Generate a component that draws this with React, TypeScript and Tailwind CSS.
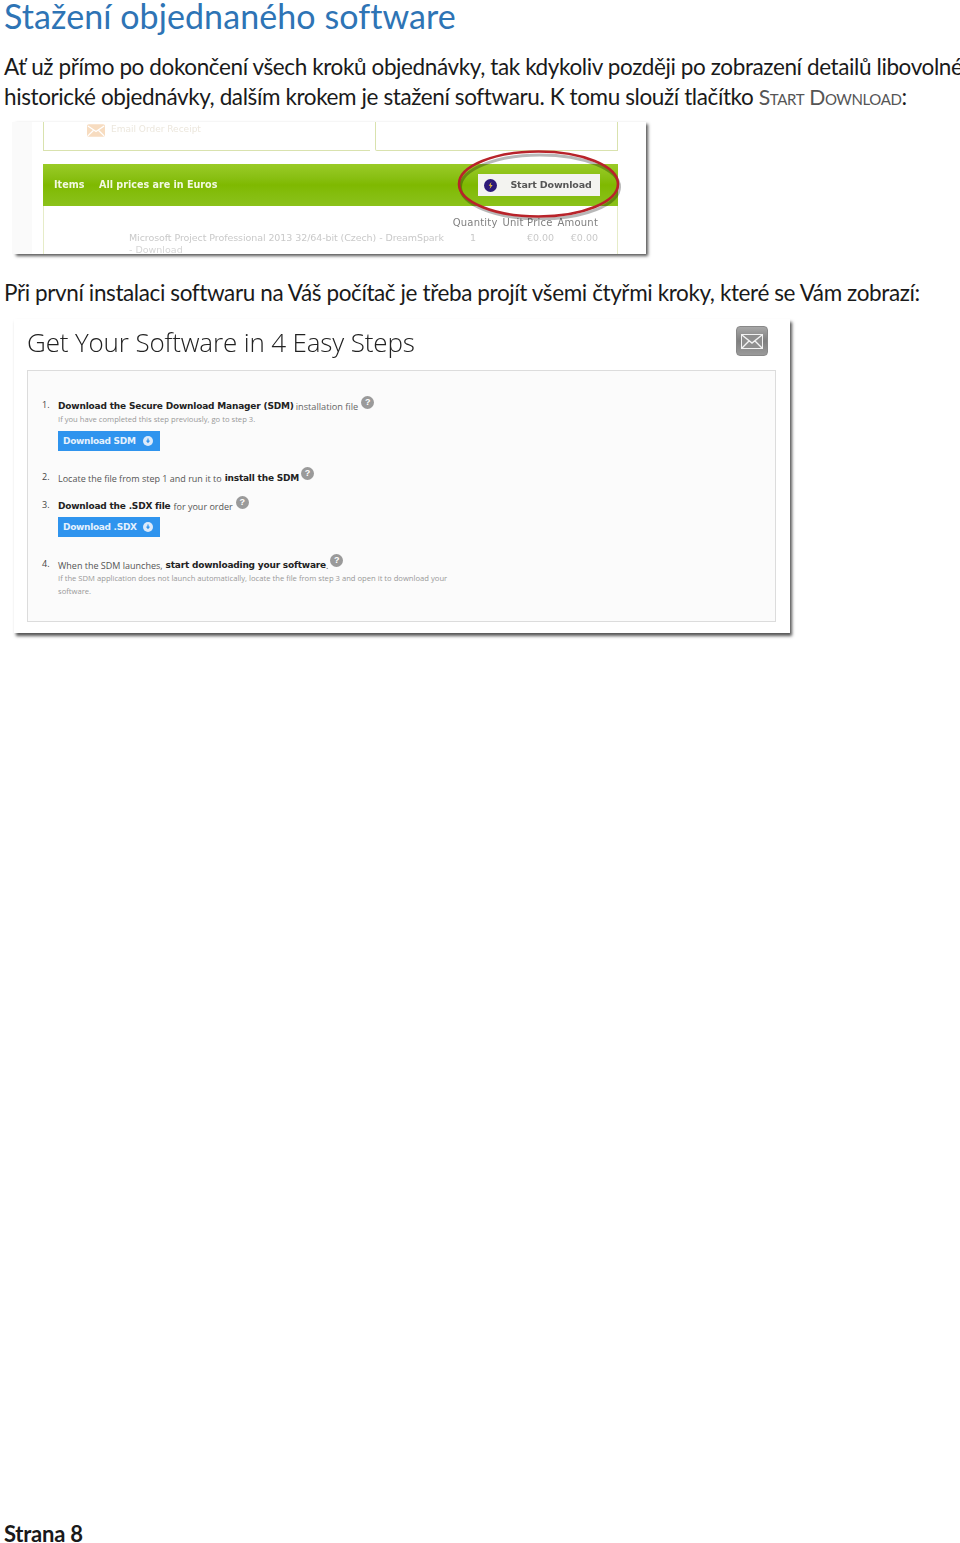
function Help({ className = "" }: { className?: string }) {
  return (
    <span className={`inline-flex h-[13px] w-[13px] shrink-0 items-center justify-center rounded-full bg-[#9a9a9a] font-['Liberation_Sans',sans-serif] text-[9px] font-bold leading-none text-white ${className}`}>
      ?
    </span>
  );
}

function BlueButton({ label }: { label: string }) {
  return (
    <div className="flex h-[20px] w-[102px] items-center bg-[#2f94ee] pl-[5px] font-['DejaVu_Sans',sans-serif] text-[9px] font-bold leading-none tracking-[-0.3px] text-[#e4f1fd]">
      <span className="w-[80px] whitespace-nowrap">{label}</span>
      <span className="flex h-[10px] w-[10px] items-center justify-center rounded-full bg-[#dceafa]">
        <svg viewBox="0 0 10 10" className="h-[8px] w-[8px]">
          <path d="M5 2v4M3.2 4.6 5 6.6l1.8-2" fill="none" stroke="#2f94ee" strokeWidth="1.5" />
        </svg>
      </span>
    </div>
  );
}

function Step({ n, children }: { n: string; children: React.ReactNode }) {
  return (
    <div className="flex items-start text-[#444]">
      <span className="w-[16px] text-[9px] leading-[12px]">{n}</span>
      <div className="min-w-0 flex-1">{children}</div>
    </div>
  );
}

const strong = "whitespace-nowrap font-['DejaVu_Sans',sans-serif] text-[9px] font-semibold leading-[15px] tracking-[-0.2px] text-[#222]";
const plain = "whitespace-nowrap text-[9px] leading-[15px] text-[#555]";
const para = "whitespace-nowrap text-[22.5px] leading-[30px] tracking-[-0.39px]";

function Shot1() {
  return (
    <div className="relative ml-[10px] h-[132px] w-[632px] bg-white shadow-[2px_2px_3px_#555] blur-[0.35px]">
      <div className="absolute -left-[2px] top-0 h-full w-[20px] bg-[#fafafa]" />
      <div className="relative pl-[29px] pr-[28px]">
        <div className="flex h-[29px] gap-[5px]">
          <div className="flex w-[327px] items-start border-b border-l border-[#d9e2ae] pl-[43px]">
            <svg viewBox="0 0 20 14" className="mt-[2px] h-[13px] w-[18px]">
              <rect width="20" height="14" rx="2" fill="#f7dcc0" />
              <path d="M1 2l9 6 9-6M1 13l6-6M19 13l-6-6" fill="none" stroke="#fff" strokeWidth="1.4" />
            </svg>
            <span className="ml-[6px] font-['DejaVu_Sans',sans-serif] text-[9px] leading-[15px] text-[#ece7dd]">Email Order Receipt</span>
          </div>
          <div className="flex-1 rounded-bl-[2px] border-b border-l border-r border-[#d9e2ae]" />
        </div>
        <div className="mt-[13px] flex h-[42px] items-center bg-gradient-to-b from-[#9acb26] via-[#7fb900] to-[#8bc21a] pl-[11px] font-['DejaVu_Sans',sans-serif] text-[9.6px] font-bold text-[#f3f9e2]">
          <span className="w-[45px]">Items</span>
          <span>All prices are in Euros</span>
          <div className="ml-[261px] flex h-[22px] w-[122px] items-center bg-[#f3f3f0] pl-[6px]">
            <span className="flex h-[13px] w-[13px] items-center justify-center rounded-full bg-[#2d1a78]">
              <svg viewBox="0 0 10 10" className="h-[9px] w-[9px]">
                <path d="M6 1 3 5.4h2L4 9l3.4-4.6H5.2z" fill="#f3c63b" />
              </svg>
            </span>
            <span className="ml-[13px] whitespace-nowrap text-[9.5px] tracking-[-0.15px] text-[#555]">Start Download</span>
          </div>
        </div>
        <div className="h-[48px] overflow-hidden border-l border-r border-[#e6ecc8] pl-[85px] pr-[19px] font-['DejaVu_Sans',sans-serif]">
          <div className="mt-[10px] flex justify-end gap-[5px] text-[10px] leading-[14px] tracking-[0.2px] text-[#808080]">
            <span>Quantity</span>
            <span>Unit Price</span>
            <span>Amount</span>
          </div>
          <div className="flex text-[9.5px] leading-[16px] text-[#c9c9c9]">
            <span className="w-[342px] whitespace-nowrap tracking-[-0.08px]">Microsoft Project Professional 2013 32/64-bit (Czech) - DreamSpark</span>
            <span className="w-[57px]">1</span>
            <span className="w-[44px]">€0.00</span>
            <span>€0.00</span>
          </div>
          <div className="text-[9.5px] leading-[8px] text-[#d6d6d6]">- Download</div>
        </div>
      </div>
      <svg viewBox="0 0 168 72" className="absolute left-[441px] top-[26px] h-[72px] w-[168px]" fill="none">
        <ellipse cx="83.5" cy="37" rx="79.5" ry="32" stroke="#000" strokeOpacity="0.28" strokeWidth="3" transform="translate(1.5 2)" />
        <ellipse cx="83.5" cy="36" rx="79.5" ry="32.5" stroke="#b8232a" strokeWidth="2.6" />
      </svg>
    </div>
  );
}

function Shot2() {
  return (
    <div className="ml-[10px] flex h-[314px] w-[776px] flex-col bg-white px-[13px] font-['Open_Sans',sans-serif] shadow-[2px_3px_3px_#555] blur-[0.3px]">
      <div className="flex h-[51px] items-start justify-between pr-[9px] pt-[6px]">
        <span className="whitespace-nowrap text-[26px] font-light leading-[34px] tracking-[-0.15px] text-[#222]">Get Your Software in 4 Easy Steps</span>
        <div className="mt-[1px] flex h-[30px] w-[32px] items-center justify-center rounded-[4px] border border-[#888] bg-gradient-to-b from-[#a8a8a8] via-[#7f7f7f] to-[#9a9a9a]">
          <svg viewBox="0 0 22 15" className="h-[15px] w-[22px]" fill="none">
            <rect x="0.5" y="0.5" width="21" height="14" fill="#8f8f8f" stroke="#f2f2f2" />
            <path d="M1 1l10 8 10-8M1 14l7-7M21 14l-7-7" stroke="#f2f2f2" strokeWidth="1.4" />
          </svg>
        </div>
      </div>
      <div className="h-[252px] w-[749px] border border-[#dcdcdc] bg-[#fbfbfb] pl-[14px] pt-[28px] text-[9px]">
        <Step n="1.">
          <div className="flex items-start">
            <span className="whitespace-nowrap font-['DejaVu_Sans',sans-serif] text-[9px] font-semibold leading-[15px] tracking-[-0.18px] text-[#222]">Download the Secure Download Manager (SDM)</span>
            <span className="ml-[2px] whitespace-nowrap text-[9.2px] leading-[15px] text-[#666]">installation file</span>
            <Help className="ml-[3px] -mt-[3px]" />
          </div>
          <div className="-mt-[1px] whitespace-nowrap text-[7.65px] leading-[13px] text-[#999]">If you have completed this step previously, go to step 3.</div>
          <div className="mt-[5px]"><BlueButton label="Download SDM" /></div>
        </Step>
        <div className="mt-[20px]">
          <Step n="2.">
            <div className="flex items-start">
              <span className={plain}>Locate the file from step 1 and run it to</span>
              <span className={`ml-[3px] ${strong}`}>install the SDM</span>
              <Help className="ml-[2px] -mt-[4px]" />
            </div>
          </Step>
        </div>
        <div className="mt-[13px]">
          <Step n="3.">
            <div className="flex items-start">
              <span className={strong}>Download the .SDX file</span>
              <span className={`ml-[3px] ${plain}`}>for your order</span>
              <Help className="ml-[3px] -mt-[3px]" />
            </div>
            <div className="mt-[3px]"><BlueButton label="Download .SDX" /></div>
          </Step>
        </div>
        <div className="mt-[21px]">
          <Step n="4.">
            <div className="flex items-start">
              <span className={plain}>When the SDM launches,</span>
              <span className={`ml-[3px] ${strong}`}>start downloading your software</span>
              <span className={plain}>.</span>
              <Help className="ml-[2px] -mt-[4px]" />
            </div>
            <div className="-mt-[1px] w-[392px] text-[7.65px] leading-[13px] text-[#999]">If the SDM application does not launch automatically, locate the file from step 3 and open it to download your software.</div>
          </Step>
        </div>
      </div>
    </div>
  );
}

export default function App() {
  return (
    <div className="relative flex h-[1543px] w-[960px] flex-col bg-white pl-[4px] font-['Lato',sans-serif] text-[#1a1a1a]">
      <h1 className="h-[36px] whitespace-nowrap text-[34px] font-normal leading-[32px] tracking-[0.08px] text-[#2e74b5]">Stažení objednaného software</h1>
      <p className={`mt-[16px] ${para}`}>Ať už přímo po dokončení všech kroků objednávky, tak kdykoliv později po zobrazení detailů libovolné</p>
      <p className={para}>
        historické objednávky, dalším krokem je stažení softwaru. K tomu slouží tlačítko <span className="text-[21.2px] text-[#555] [font-variant-caps:small-caps]">Start Download</span>:
      </p>
      <div className="mt-[10px]"><Shot1 /></div>
      <p className={`mt-[24px] ${para}`}>Při první instalaci softwaru na Váš počítač je třeba projít všemi čtyřmi kroky, které se Vám zobrazí:</p>
      <div className="mt-[11px]"><Shot2 /></div>
      <div className="mt-auto h-[18px] text-[22px] font-bold leading-[18px] tracking-[-0.25px]">Strana 8</div>
    </div>
  );
}
